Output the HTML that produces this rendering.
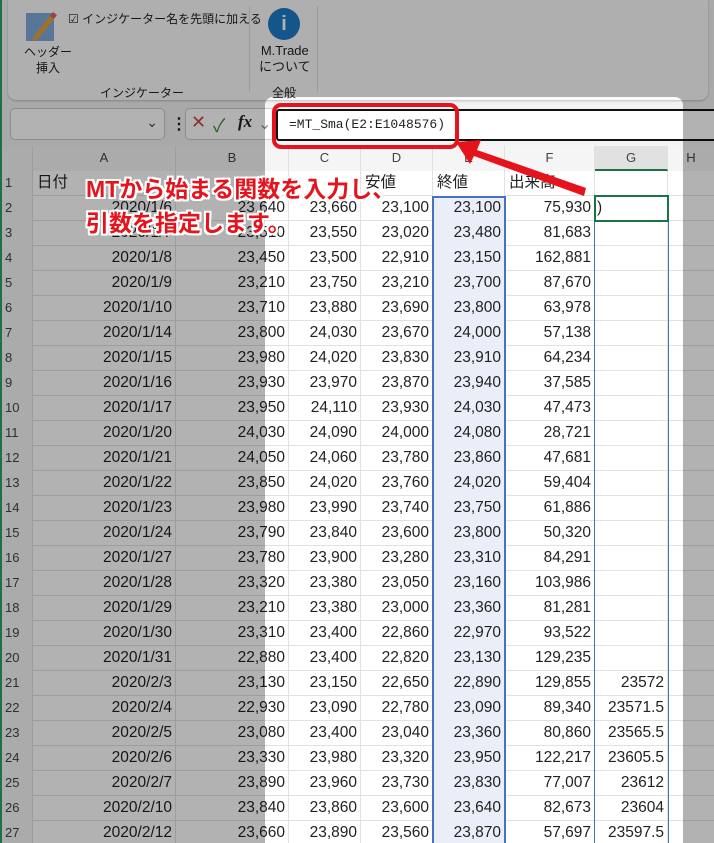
<!DOCTYPE html>
<html style="width:714px;height:843px;overflow:hidden"><head><meta charset="utf-8">
<style>
*{margin:0;padding:0;box-sizing:border-box}
body{width:714px;height:843px;overflow:hidden;position:relative;background:#f3f3f3;font-family:"Liberation Sans","Noto Sans CJK JP",sans-serif;color:#222}
.rib{position:absolute;left:8px;top:0;width:700px;height:100px;background:#fbfbfb;border-radius:0 0 8px 8px;box-shadow:0 1px 2px #bbb}
.t{position:absolute;font-size:12px;color:#222;white-space:nowrap}
.nb{position:absolute;left:10px;top:108px;width:155px;height:32px;background:#fff;border:1px solid #ccc;border-radius:5px}
.fb{position:absolute;left:185px;top:108px;width:90px;height:32px;background:#fff;border:1px solid #ccc;border-radius:5px}
.grid{position:absolute;left:0;top:146px;width:714px;height:697px;background:#fff}
.r{position:absolute;left:0;height:25px;width:714px;display:flex;font-size:15.5px;line-height:24px;border-bottom:1px solid #e1e1e1}
.r>div{height:25px;border-right:1px solid #e1e1e1;text-align:right;padding-right:3px;white-space:nowrap;overflow:hidden}
.r>div:nth-child(1){width:33px;text-align:left;padding-left:5px;background:#f5f5f5;font-size:13px;color:#444}
.r>div:nth-child(2){width:143px}
.r>div:nth-child(3){width:113px}
.r>div:nth-child(4){width:72px}
.r>div:nth-child(5){width:72px}
.r>div:nth-child(6){width:72px;background:#e9eef8}
.r>div:nth-child(7){width:90px}
.r>div:nth-child(8){width:73px}
.r>div:nth-child(9){flex:1;border:none}
.h>div{text-align:center!important;background:#f5f5f5!important;font-size:13px;color:#444;padding:0!important}
.dim{position:absolute;left:265px;top:97px;width:418px;height:746px;border-radius:8px 8px 0 0;box-shadow:0 0 0 1200px rgba(0,0,0,.3)}
.ann{position:absolute;left:86px;font-size:23px;font-weight:bold;color:#e5141c;white-space:nowrap;text-shadow:2px 0 #fff,-2px 0 #fff,0 2px #fff,0 -2px #fff,2px 2px #fff,-2px -2px #fff,2px -2px #fff,-2px 2px #fff}
</style></head><body>
<div class="rib"></div>
<svg style="position:absolute;left:26px;top:10px" width="32" height="32"><rect x="0" y="3" width="28" height="28" fill="#7fa9d8"/><path d="M8 26 L24 6 L28 9 L12 29 L6 31 Z" fill="#e8a33a"/><path d="M24 6 L27 2 L31 5 L28 9Z" fill="#e06060"/></svg>
<div class="t" style="left:24px;top:44px;line-height:16px;text-align:center">ヘッダー<br>挿入</div>
<div class="t" style="left:68px;top:10px">☑ インジケーター名を先頭に加える</div>
<div class="t" style="left:100px;top:84px">インジケーター</div>
<div style="position:absolute;left:249px;top:6px;width:1px;height:86px;background:#ddd"></div>
<div style="position:absolute;left:317px;top:6px;width:1px;height:86px;background:#ddd"></div>
<div style="position:absolute;left:268px;top:8px;width:32px;height:32px;border-radius:50%;background:#1e7ac8;color:#fff;font-weight:bold;font-size:20px;text-align:center;line-height:32px">i</div>
<div class="t" style="left:259px;top:43px;font-size:13px;line-height:16px;text-align:center">M.Trade<br>について</div>
<div class="t" style="left:272px;top:84px">全般</div>
<div class="nb"><span style="position:absolute;right:6px;top:5px;font-size:14px;color:#444">⌄</span></div>
<div class="t" style="left:171px;top:114px;font-size:16px;font-weight:bold">⋮</div>
<div class="fb"><span style="position:absolute;left:5px;top:3px;font-size:18px;color:#c44">✕</span><span style="position:absolute;left:27px;top:3px;font-size:18px;color:#3a8a3a">✓</span><span style="position:absolute;left:52px;top:3px;font-size:17px;font-style:italic;font-family:'Liberation Serif',serif;font-weight:bold">fx</span><span style="position:absolute;left:72px;top:5px;color:#888">⌄</span></div>
<div class="grid"></div>
<div class="r h" style="top:146px"><div></div><div>A</div><div>B</div><div>C</div><div>D</div><div>E</div><div>F</div><div style="background:#e1e1e1!important;border-bottom:2px solid #1e7145">G</div><div>H</div></div>
<div class="r" style="top:171px"><div>1</div><div style="text-align:left;padding-left:4px">日付</div><div></div><div></div><div style="text-align:left;padding-left:4px">安値</div><div style="text-align:left;padding-left:4px;background:#fff">終値</div><div style="text-align:left;padding-left:4px">出来高</div><div></div><div></div></div>
<div class="r" style="top:196px"><div>2</div><div>2020/1/6</div><div>23,640</div><div>23,660</div><div>23,100</div><div>23,100</div><div>75,930</div><div style="text-align:left;padding-left:2px">)</div><div></div></div>
<div class="r" style="top:221px"><div>3</div><div>2020/1/7</div><div>23,510</div><div>23,550</div><div>23,020</div><div>23,480</div><div>81,683</div><div></div><div></div></div>
<div class="r" style="top:246px"><div>4</div><div>2020/1/8</div><div>23,450</div><div>23,500</div><div>22,910</div><div>23,150</div><div>162,881</div><div></div><div></div></div>
<div class="r" style="top:271px"><div>5</div><div>2020/1/9</div><div>23,210</div><div>23,750</div><div>23,210</div><div>23,700</div><div>87,670</div><div></div><div></div></div>
<div class="r" style="top:296px"><div>6</div><div>2020/1/10</div><div>23,710</div><div>23,880</div><div>23,690</div><div>23,800</div><div>63,978</div><div></div><div></div></div>
<div class="r" style="top:321px"><div>7</div><div>2020/1/14</div><div>23,800</div><div>24,030</div><div>23,670</div><div>24,000</div><div>57,138</div><div></div><div></div></div>
<div class="r" style="top:346px"><div>8</div><div>2020/1/15</div><div>23,980</div><div>24,020</div><div>23,830</div><div>23,910</div><div>64,234</div><div></div><div></div></div>
<div class="r" style="top:371px"><div>9</div><div>2020/1/16</div><div>23,930</div><div>23,970</div><div>23,870</div><div>23,940</div><div>37,585</div><div></div><div></div></div>
<div class="r" style="top:396px"><div>10</div><div>2020/1/17</div><div>23,950</div><div>24,110</div><div>23,930</div><div>24,030</div><div>47,473</div><div></div><div></div></div>
<div class="r" style="top:421px"><div>11</div><div>2020/1/20</div><div>24,030</div><div>24,090</div><div>24,000</div><div>24,080</div><div>28,721</div><div></div><div></div></div>
<div class="r" style="top:446px"><div>12</div><div>2020/1/21</div><div>24,050</div><div>24,060</div><div>23,780</div><div>23,860</div><div>47,681</div><div></div><div></div></div>
<div class="r" style="top:471px"><div>13</div><div>2020/1/22</div><div>23,850</div><div>24,020</div><div>23,760</div><div>24,020</div><div>59,404</div><div></div><div></div></div>
<div class="r" style="top:496px"><div>14</div><div>2020/1/23</div><div>23,980</div><div>23,990</div><div>23,740</div><div>23,750</div><div>61,886</div><div></div><div></div></div>
<div class="r" style="top:521px"><div>15</div><div>2020/1/24</div><div>23,790</div><div>23,840</div><div>23,600</div><div>23,800</div><div>50,320</div><div></div><div></div></div>
<div class="r" style="top:546px"><div>16</div><div>2020/1/27</div><div>23,780</div><div>23,900</div><div>23,280</div><div>23,310</div><div>84,291</div><div></div><div></div></div>
<div class="r" style="top:571px"><div>17</div><div>2020/1/28</div><div>23,320</div><div>23,380</div><div>23,050</div><div>23,160</div><div>103,986</div><div></div><div></div></div>
<div class="r" style="top:596px"><div>18</div><div>2020/1/29</div><div>23,210</div><div>23,380</div><div>23,000</div><div>23,360</div><div>81,281</div><div></div><div></div></div>
<div class="r" style="top:621px"><div>19</div><div>2020/1/30</div><div>23,310</div><div>23,400</div><div>22,860</div><div>22,970</div><div>93,522</div><div></div><div></div></div>
<div class="r" style="top:646px"><div>20</div><div>2020/1/31</div><div>22,880</div><div>23,400</div><div>22,820</div><div>23,130</div><div>129,235</div><div></div><div></div></div>
<div class="r" style="top:671px"><div>21</div><div>2020/2/3</div><div>23,130</div><div>23,150</div><div>22,650</div><div>22,890</div><div>129,855</div><div>23572</div><div></div></div>
<div class="r" style="top:696px"><div>22</div><div>2020/2/4</div><div>22,930</div><div>23,090</div><div>22,780</div><div>23,090</div><div>89,340</div><div>23571.5</div><div></div></div>
<div class="r" style="top:721px"><div>23</div><div>2020/2/5</div><div>23,080</div><div>23,400</div><div>23,040</div><div>23,360</div><div>80,860</div><div>23565.5</div><div></div></div>
<div class="r" style="top:746px"><div>24</div><div>2020/2/6</div><div>23,330</div><div>23,980</div><div>23,320</div><div>23,950</div><div>122,217</div><div>23605.5</div><div></div></div>
<div class="r" style="top:771px"><div>25</div><div>2020/2/7</div><div>23,890</div><div>23,960</div><div>23,730</div><div>23,830</div><div>77,007</div><div>23612</div><div></div></div>
<div class="r" style="top:796px"><div>26</div><div>2020/2/10</div><div>23,840</div><div>23,860</div><div>23,600</div><div>23,640</div><div>82,673</div><div>23604</div><div></div></div>
<div class="r" style="top:821px"><div>27</div><div>2020/2/12</div><div>23,660</div><div>23,890</div><div>23,560</div><div>23,870</div><div>57,697</div><div>23597.5</div><div></div></div>
<div style="position:absolute;left:432px;top:196px;width:74px;height:660px;border:2px solid #4472c4"></div>
<div style="position:absolute;left:594px;top:196px;width:75px;height:660px;border:1.5px solid #4472c4"></div>
<div style="position:absolute;left:594px;top:195px;width:75px;height:27px;border:2px solid #1e7145"></div>
<div style="position:absolute;left:276px;top:109px;width:450px;height:32px;background:#fff;border:2px solid #111;border-radius:3px;font-family:'Liberation Mono',monospace;font-size:13px;line-height:28px;padding-left:11px">=MT_Sma(E2:E1048576)</div>
<div class="dim"></div>
<div style="position:absolute;left:0;top:0;width:2px;height:843px;background:#1e7145"></div>
<div style="position:absolute;left:272px;top:103px;width:187px;height:46px;border:4px solid #e5141c;border-radius:9px"></div>
<svg style="position:absolute;left:0;top:0" width="714" height="843"><polygon points="586,188 477,150 481,140 456,142 470,164 474,156 584,196" fill="#e5141c"/></svg>
<div class="ann" style="top:170px">MTから始まる関数を入力し、</div>
<div class="ann" style="top:204px">引数を指定します。</div>
</body></html>
